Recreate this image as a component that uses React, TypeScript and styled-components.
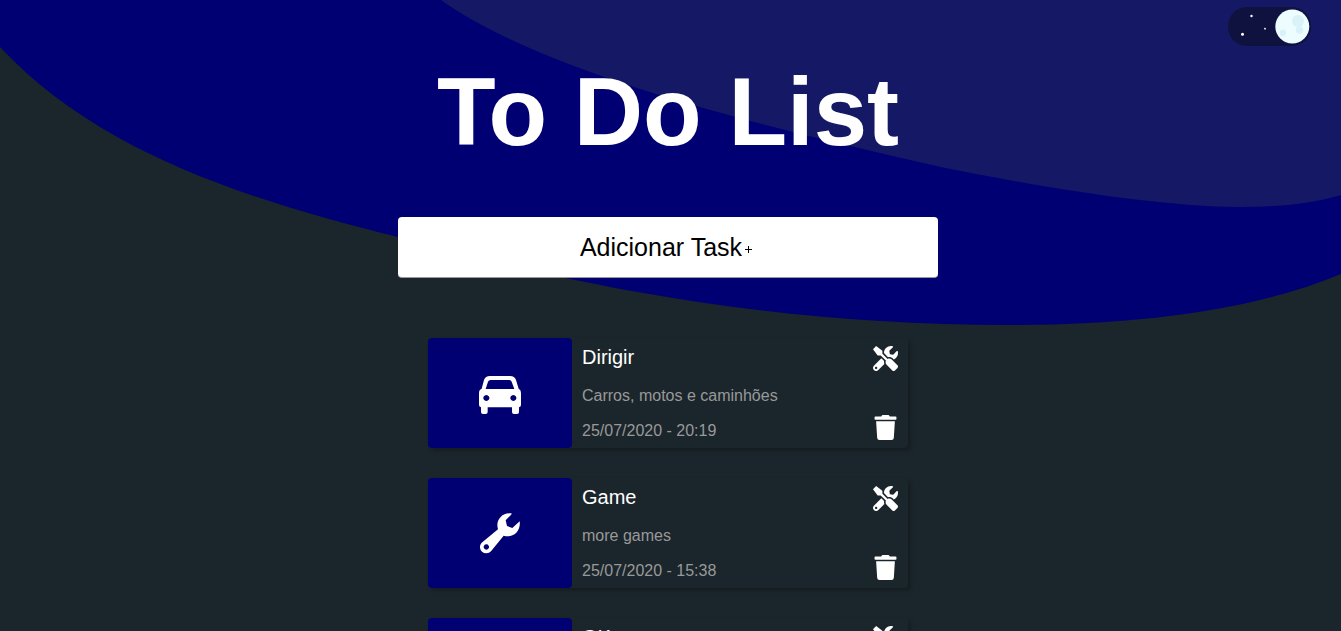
import React, { useState } from "react";
import styled, { createGlobalStyle } from "styled-components";
import { FaTools, FaTrash } from "react-icons/fa";

const GlobalStyle = createGlobalStyle`
  *, *::before, *::after { box-sizing: border-box; }
  body {
    margin: 0;
    background: #1b262c;
    color: #fff;
    font-family: "Liberation Sans", Arial, Helvetica, sans-serif;
  }
`;

const Page = styled.div`
  position: relative;
  height: 100vh;
  overflow: hidden;
  padding-right: 5px;
`;

const Waves = styled.svg`
  position: absolute;
  top: 0;
  left: 0;
  width: 100%;
  height: 325px;
  z-index: -1;
`;

const Switch = styled.label`
  position: absolute;
  top: 7px;
  right: 30px;
  width: 83px;
  height: 39px;
  border-radius: 20px;
  cursor: pointer;

  input {
    position: absolute;
    inset: 0;
    width: 100%;
    height: 100%;
    margin: 0;
    opacity: 0;
  }

  svg { display: block; }
`;

const Content = styled.main`
  display: flex;
  flex-direction: column;
  align-items: center;
`;

const Title = styled.h1`
  margin: 56px 0 50px;
  font-size: 96px;
  line-height: 111px;
`;

const AddButton = styled.button`
  display: flex;
  align-items: center;
  justify-content: center;
  gap: 2px;
  width: 540px;
  max-width: 90%;
  height: 61px;
  padding: 0 4px 0 0;
  border: 0;
  border-bottom: 1px solid #999;
  border-radius: 4px;
  background: #fff;
  color: #000;
  font: 25px "Liberation Sans", Arial, sans-serif;
`;

const List = styled.ul`
  display: flex;
  flex-direction: column;
  gap: 30px;
  width: 480px;
  max-width: 90%;
  margin: 60px 0 0;
  padding: 0;
  list-style: none;
`;

const Card = styled.li`
  display: flex;
  height: 110px;
  border-radius: 4px;
  box-shadow: 3px 3px 4px rgba(0, 0, 0, 0.25);
`;

const Cover = styled.div`
  display: flex;
  align-items: center;
  justify-content: center;
  flex: 0 0 30%;
  border-radius: 4px;
  background: #000072;
`;

const Details = styled.div`
  display: flex;
  flex-direction: column;
  flex: 1;
  padding: 7px 10px;
`;

const TaskName = styled.h2`
  margin: 0 0 15px;
  font-size: 20px;
  font-weight: 400;
  line-height: 24px;
`;

const TaskText = styled.p`
  margin: 0 0 12px;
  color: #999;
  font-size: 16px;
  line-height: 23px;
`;

const Actions = styled.div`
  display: flex;
  flex-direction: column;
  justify-content: space-between;
  padding: 8px 10px 8px 0;
`;

const IconButton = styled.button`
  display: flex;
  padding: 0;
  border: 0;
  background: none;
  color: #fff;
  font-size: 25px;
  cursor: pointer;
`;

function CarIcon() {
  return (
    <svg width="42" height="42" viewBox="0 -12 126 126" fill="#fff" fillRule="evenodd" aria-hidden="true">
      <path d="M33 0H93Q107 0 111 12L119 38Q126 41 126 51V86Q126 92 120 94V108Q120 114 114 114H105Q99 114 99 108V94H26V108Q26 114 20 114H12Q6 114 6 108V94Q0 92 0 86V51Q0 41 8 38L15 12Q19 0 33 0ZM35 12Q29 12 27 17L20 39H106L98 17Q96 12 91 12ZM22 57a9 9 0 1 0 .1 0ZM103 57a9 9 0 1 0 .1 0Z" />
    </svg>
  );
}

function WrenchIcon() {
  return (
    <svg width="40" height="42" viewBox="0 -3 120 126" fill="#fff" fillRule="evenodd" aria-hidden="true">
      <path d="M96 2L77 22L81 39L97 45L119 25C121 38 117 51 109 59C99 69 84 72 71 68L33 115A19 19 0 1 1 5 89L54 49C50 35 52 22 62 12C71 2 84 -1 96 2ZM19 94a8 8 0 1 0 .1 0Z" />
    </svg>
  );
}

const tasks = [
  { name: "Dirigir", text: "Carros, motos e caminhões", date: "25/07/2020 - 20:19", icon: <CarIcon /> },
  { name: "Game", text: "more games", date: "25/07/2020 - 15:38", icon: <WrenchIcon /> },
  { name: "OK", text: "ok", date: "25/07/2020 - 15:30", icon: <WrenchIcon /> },
];

function ThemeSwitch() {
  const [dark, setDark] = useState(true);
  return (
    <Switch>
      <input type="checkbox" role="switch" aria-label="Tema escuro" checked={dark} onChange={() => setDark(!dark)} />
      <svg width="83" height="39" viewBox="0 0 83 39" aria-hidden="true">
        <rect width="83" height="39" rx="19" fill="#0f123f" />
        <circle cx="14.5" cy="27.3" r="1.5" fill="#fff" />
        <circle cx="23.5" cy="9" r="1.2" fill="#fff" />
        <circle cx="37" cy="21.7" r="0.9" fill="#fff" />
        <g transform={dark ? undefined : "translate(-45 0)"}>
          <circle cx="64.3" cy="19.5" r="17" fill="#ecfcff" />
          <circle cx="70" cy="14" r="6" fill="#d9f2f7" />
          <circle cx="71.5" cy="23" r="3.7" fill="#d9f2f7" />
          <circle cx="55" cy="26" r="3.2" fill="#d9f2f7" />
        </g>
      </svg>
    </Switch>
  );
}

export default function App() {
  return (
    <Page>
      <GlobalStyle />
      <Waves viewBox="0 0 1341 325" preserveAspectRatio="none" aria-hidden="true">
        <path d="M0 0V47C100 154 250 200 398 237C540 275 740 325 1010 325C1150 325 1260 308 1341 274V0Z" fill="#000072" />
        <path d="M441 0C551 78 781 130 941 167C1040 187 1160 207 1241 207C1290 207 1320 201 1341 195V0Z" fill="#151965" />
      </Waves>
      <ThemeSwitch />
      <Content>
        <Title>To Do List</Title>
        <AddButton type="button">
          Adicionar Task
          <svg width="8" height="12" viewBox="0 0 8 12" aria-hidden="true">
            <path d="M4.5 5v7M1 8.5h7" stroke="#000" />
          </svg>
        </AddButton>
        <List>
          {tasks.map((task) => (
            <Card key={task.name}>
              <Cover>{task.icon}</Cover>
              <Details>
                <TaskName>{task.name}</TaskName>
                <TaskText>{task.text}</TaskText>
                <TaskText>{task.date}</TaskText>
              </Details>
              <Actions>
                <IconButton type="button" aria-label={`Editar ${task.name}`}><FaTools /></IconButton>
                <IconButton type="button" aria-label={`Excluir ${task.name}`}><FaTrash /></IconButton>
              </Actions>
            </Card>
          ))}
        </List>
      </Content>
    </Page>
  );
}
